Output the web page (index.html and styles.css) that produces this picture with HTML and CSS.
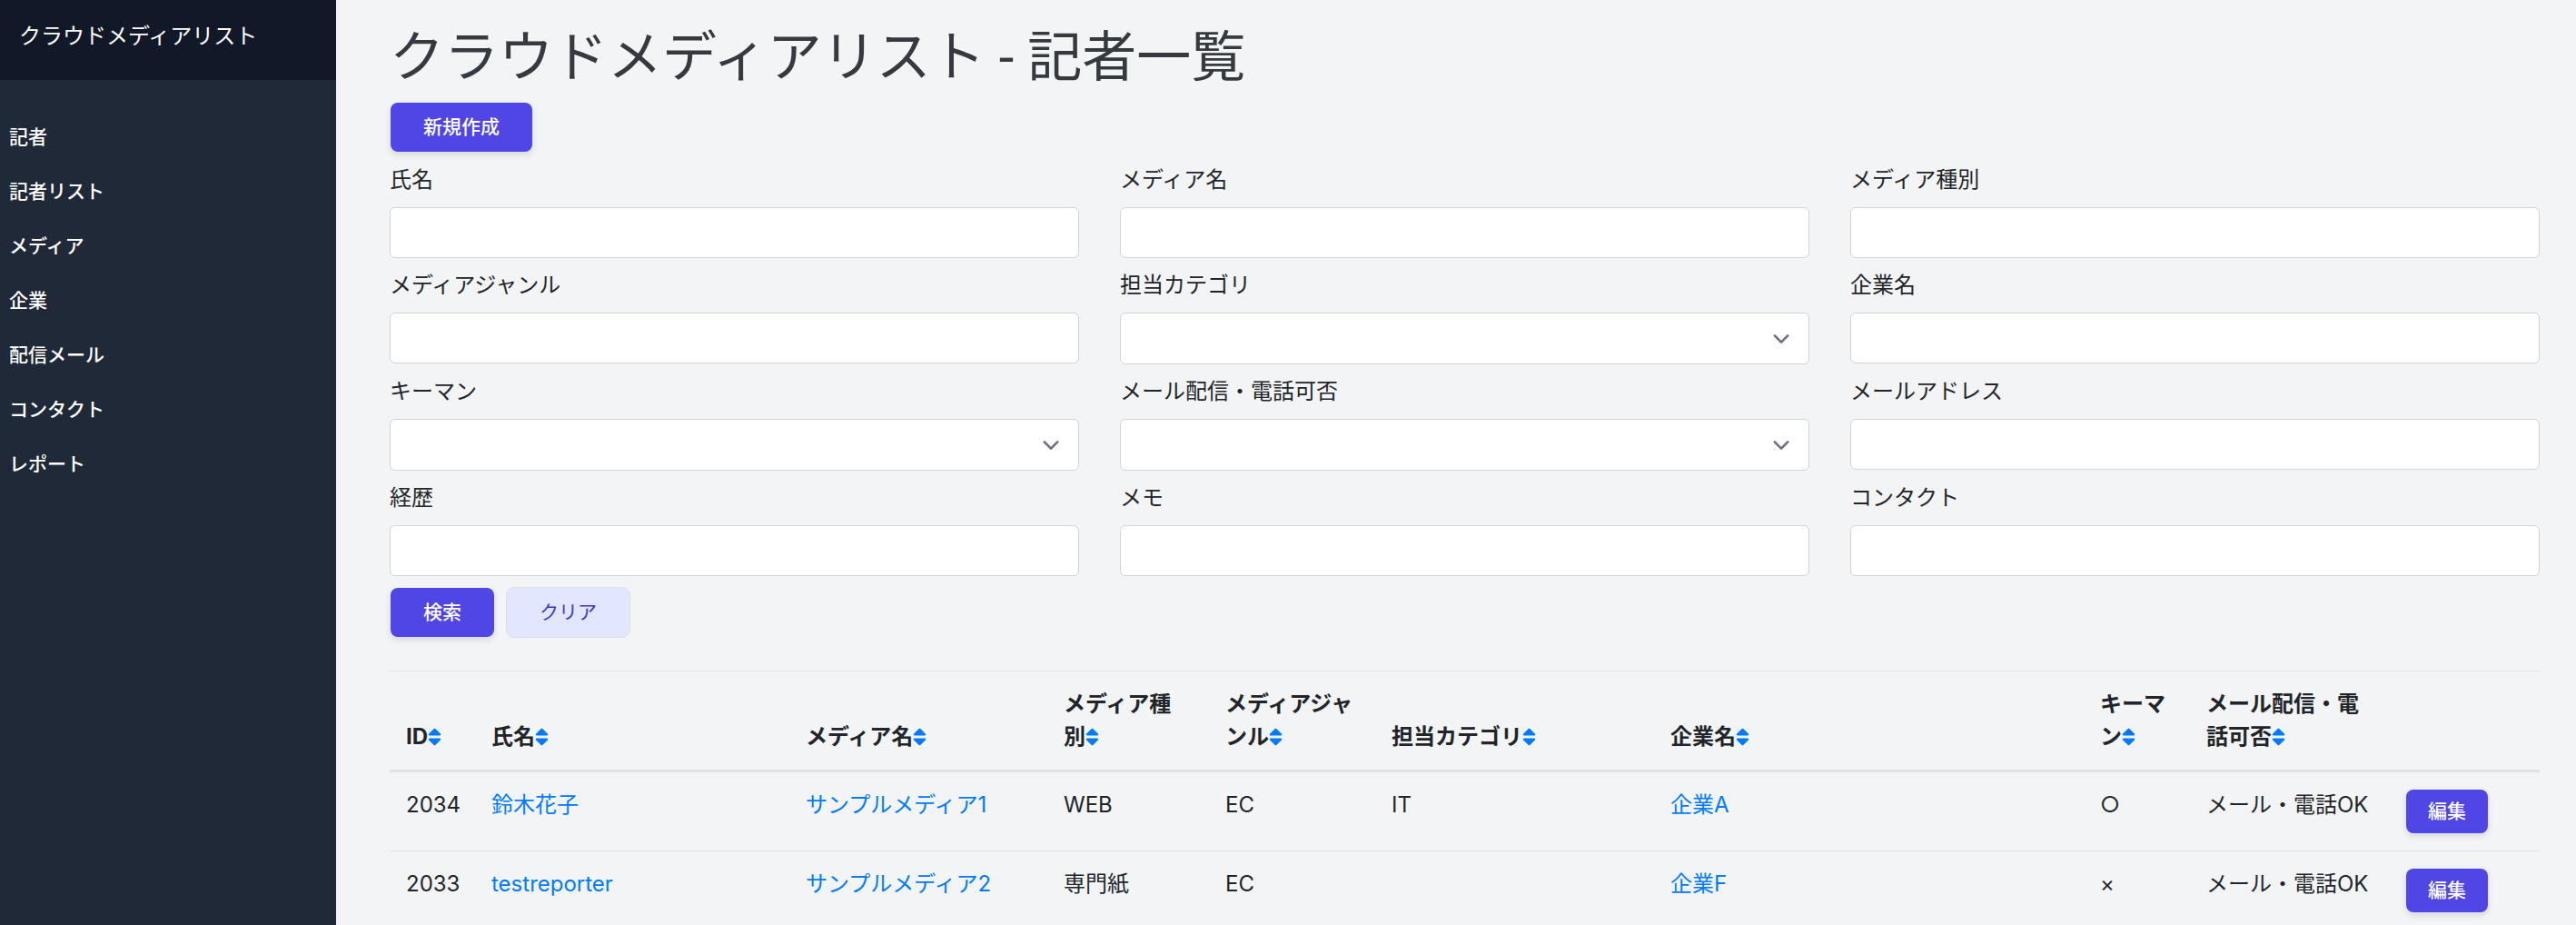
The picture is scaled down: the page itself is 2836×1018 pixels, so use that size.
FILE: index.html
```html
<!DOCTYPE html>
<html lang="ja">
<head>
    <meta charset="UTF-8">
    <meta name="viewport" content="width=device-width, initial-scale=1.0">
    <title>クラウドメディアリスト - 記者一覧</title>
    <link rel="stylesheet" href="styles.css">
</head>

<body>
    <!-- Sort icon -->
    <svg class="icon-defs" aria-hidden="true">
        <symbol id="sort" viewBox="0 0 320 512">
            <path d="M41 288h238c21.4 0 32.1 25.9 17 41L177 448c-9.4 9.4-24.6 9.4-33.9 0L24 329c-15.1-15.1-4.4-41 17-41zm255-105L177 64c-9.4-9.4-24.6-9.4-33.9 0L24 183c-15.1 15.1-4.4 41 17 41h238c21.4 0 32.1-25.9 17-41z"/>
        </symbol>
    </svg>

    <div class="layout">
        <aside class="sidebar">
            <div class="sidebar-header">クラウドメディアリスト</div>
            <nav class="sidebar-nav">
                <a href="#">記者</a>
                <a href="#">記者リスト</a>
                <a href="#">メディア</a>
                <a href="#">企業</a>
                <a href="#">配信メール</a>
                <a href="#">コンタクト</a>
                <a href="#">レポート</a>
            </nav>
        </aside>

        <main class="content">
            <h1>クラウドメディアリスト - 記者一覧</h1>
            <button type="button" class="btn btn-primary">新規作成</button>

            <form class="search-form">
                <div class="fields">
                    <div class="field">
                        <label for="name">氏名</label>
                        <input type="text" id="name" class="form-control">
                    </div>
                    <div class="field">
                        <label for="media-name">メディア名</label>
                        <input type="text" id="media-name" class="form-control">
                    </div>
                    <div class="field">
                        <label for="media-type">メディア種別</label>
                        <input type="text" id="media-type" class="form-control">
                    </div>

                    <div class="field">
                        <label for="media-genre">メディアジャンル</label>
                        <input type="text" id="media-genre" class="form-control">
                    </div>
                    <div class="field">
                        <label for="category">担当カテゴリ</label>
                        <select id="category" class="form-control"><option></option></select>
                    </div>
                    <div class="field">
                        <label for="company">企業名</label>
                        <input type="text" id="company" class="form-control">
                    </div>

                    <div class="field">
                        <label for="keyman">キーマン</label>
                        <select id="keyman" class="form-control"><option></option></select>
                    </div>
                    <div class="field">
                        <label for="permission">メール配信・電話可否</label>
                        <select id="permission" class="form-control"><option></option></select>
                    </div>
                    <div class="field">
                        <label for="email">メールアドレス</label>
                        <input type="text" id="email" class="form-control">
                    </div>

                    <div class="field">
                        <label for="career">経歴</label>
                        <input type="text" id="career" class="form-control">
                    </div>
                    <div class="field">
                        <label for="memo">メモ</label>
                        <input type="text" id="memo" class="form-control">
                    </div>
                    <div class="field">
                        <label for="contact">コンタクト</label>
                        <input type="text" id="contact" class="form-control">
                    </div>
                </div>
                <div class="form-actions">
                    <button type="button" class="btn btn-primary">検索</button>
                    <button type="reset" class="btn btn-light">クリア</button>
                </div>
            </form>

            <table class="table">
                <colgroup>
                    <col class="col-id">
                    <col class="col-name">
                    <col class="col-media">
                    <col class="col-type">
                    <col class="col-genre">
                    <col class="col-category">
                    <col class="col-company">
                    <col class="col-keyman">
                    <col class="col-permission">
                    <col class="col-action">
                </colgroup>
                <thead>
                    <tr>
                        <th>ID<a href="#" aria-label="並び替え"><svg class="sort"><use href="#sort"/></svg></a></th>
                        <th>氏名<a href="#" aria-label="並び替え"><svg class="sort"><use href="#sort"/></svg></a></th>
                        <th>メディア名<a href="#" aria-label="並び替え"><svg class="sort"><use href="#sort"/></svg></a></th>
                        <th>メディア種別<a href="#" aria-label="並び替え"><svg class="sort"><use href="#sort"/></svg></a></th>
                        <th>メディアジャンル<a href="#" aria-label="並び替え"><svg class="sort"><use href="#sort"/></svg></a></th>
                        <th>担当カテゴリ<a href="#" aria-label="並び替え"><svg class="sort"><use href="#sort"/></svg></a></th>
                        <th>企業名<a href="#" aria-label="並び替え"><svg class="sort"><use href="#sort"/></svg></a></th>
                        <th>キーマン<a href="#" aria-label="並び替え"><svg class="sort"><use href="#sort"/></svg></a></th>
                        <th>メール配信・電話可否<a href="#" aria-label="並び替え"><svg class="sort"><use href="#sort"/></svg></a></th>
                        <th></th>
                    </tr>
                </thead>
                <tbody>
                    <tr>
                        <td>2034</td>
                        <td><a href="#">鈴木花子</a></td>
                        <td><a href="#">サンプルメディア1</a></td>
                        <td>WEB</td>
                        <td>EC</td>
                        <td>IT</td>
                        <td><a href="#">企業A</a></td>
                        <td>○</td>
                        <td>メール・電話OK</td>
                        <td><button type="button" class="btn btn-primary btn-sm">編集</button></td>
                    </tr>
                    <tr>
                        <td>2033</td>
                        <td><a href="#">testreporter</a></td>
                        <td><a href="#">サンプルメディア2</a></td>
                        <td>専門紙</td>
                        <td>EC</td>
                        <td></td>
                        <td><a href="#">企業F</a></td>
                        <td>×</td>
                        <td>メール・電話OK</td>
                        <td><button type="button" class="btn btn-primary btn-sm">編集</button></td>
                    </tr>
                </tbody>
            </table>
        </main>
    </div>
</body>
</html>
```
FILE: styles.css
```css
* {
    box-sizing: border-box;
    margin: 0;
    padding: 0;
}

body {
    font-family: Inter, 'Noto Sans CJK JP', sans-serif;
    font-size: 24px;
    line-height: 36px;
    color: #212529;
    background-color: #f3f4f6;
}

a {
    color: #007bff;
    text-decoration: none;
}

.icon-defs {
    display: none;
}

.layout {
    display: flex;
    height: 100vh;
    overflow: hidden;
}

/* Sidebar */
.sidebar {
    flex: 0 0 370px;
    background-color: #1f2937;
    color: #fff;
}

.sidebar-header {
    padding: 22px 21px 30px;
    background-color: #111827;
}

.sidebar-nav {
    display: flex;
    flex-direction: column;
    gap: 6px;
    padding: 36px 0;
}

.sidebar-nav a {
    padding: 12px 10px;
    font-size: 21px;
    line-height: 30px;
    font-weight: 500;
    color: #fff;
}

/* Content */
.content {
    flex: 1;
    min-width: 0;
    padding: 28px 40px 36px 59px;
    overflow-y: auto;
    scrollbar-width: none;
}

h1 {
    margin-bottom: 12px;
    font-family: Roboto, 'Noto Sans CJK JP', sans-serif;
    font-size: 60px;
    line-height: 72px;
    font-weight: 400;
    color: #343a40;
}

/* Buttons */
.btn {
    display: block;
    padding: 12px 36px;
    border: 1px solid transparent;
    border-radius: 9px;
    font-family: inherit;
    font-size: 21px;
    line-height: 30px;
    cursor: pointer;
}

.btn-primary {
    background-color: #4f46e5;
    background-clip: padding-box;
    color: #fff;
    font-weight: 500;
    box-shadow: 0 3px 6px rgba(0, 0, 0, 0.1);
}

.btn-light {
    background-color: #e0e7ff;
    border-color: #dde2ea;
    color: #4338ca;
}

.btn-sm {
    padding: 9px 24px;
}

/* Search form */
.search-form {
    margin: 12px 0 36px;
}

.fields {
    display: grid;
    grid-template-columns: repeat(3, 1fr);
    gap: 12px 45px;
}

.field label {
    display: block;
    margin-bottom: 12px;
}

.form-control {
    display: block;
    width: 100%;
    height: 56px;
    padding: 9px 18px;
    border: 1px solid #ced4da;
    border-radius: 6px;
    background-color: #fff;
    color: #495057;
    font-family: inherit;
    font-size: 24px;
}

select.form-control {
    height: 57px;
    appearance: none;
    background-image: url("data:image/svg+xml,%3csvg xmlns='http://www.w3.org/2000/svg' fill='none' viewBox='0 0 20 20'%3e%3cpath stroke='%236b7280' stroke-linecap='round' stroke-linejoin='round' stroke-width='1.5' d='M6 8l4 4 4-4'/%3e%3c/svg%3e");
    background-position: right 12px center;
    background-repeat: no-repeat;
    background-size: 36px 36px;
}

.form-actions {
    display: flex;
    gap: 12px;
    margin-top: 12px;
}

/* Table */
.table {
    width: 100%;
    table-layout: fixed;
    border-collapse: separate;
    border-spacing: 0;
}

.table th,
.table td {
    padding: 18px;
    border-top: 1px solid #dee2e6;
    text-align: left;
    vertical-align: top;
}

.table th {
    border-bottom: 3px solid #dee2e6;
    font-weight: 700;
    vertical-align: bottom;
    word-break: break-all;
}

.table tbody tr:first-child td {
    border-top: none;
}

.sort {
    width: 15px;
    height: 24px;
    fill: currentColor;
    vertical-align: -4px;
}

.col-id { width: 94px; }
.col-name { width: 346px; }
.col-media { width: 284px; }
.col-type { width: 178px; }
.col-genre { width: 183px; }
.col-category { width: 307px; }
.col-company { width: 473px; }
.col-keyman { width: 117px; }
.col-permission { width: 219px; }
.col-action { width: 166px; }
```
